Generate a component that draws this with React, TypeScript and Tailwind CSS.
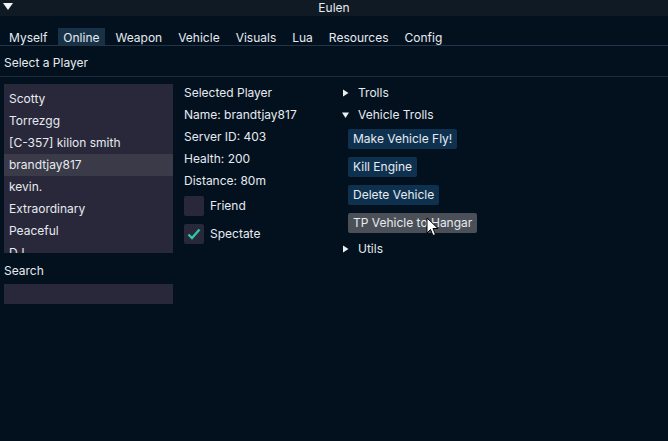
import React from 'react';

const tabs = ['Myself', 'Online', 'Weapon', 'Vehicle', 'Visuals', 'Lua', 'Resources', 'Config'];
const players = ['Scotty', 'Torrezgg', '[C-357] kilion smith', 'brandtjay817', 'kevin.', 'Extraordinary', 'Peaceful', 'DJ'];

function Tri({ open }: { open?: boolean }) {
  return (
    <svg width="7" height="8" viewBox="0 0 7 8" className="shrink-0">
      {open ? <path d="M0 1.5h7L3.5 7z" fill="#e8eef2" /> : <path d="M1 0.5v7L6.5 4z" fill="#e8eef2" />}
    </svg>
  );
}

function Check({ checked, label }: { checked?: boolean; label: string }) {
  return (
    <div className="flex h-[20px] items-center gap-[6px]">
      <div className="flex h-[20px] w-[20px] items-center justify-center rounded-[2px] bg-[#29283a]">
        {checked && (
          <svg width="14" height="12" viewBox="0 0 14 12">
            <path d="M1.5 6.5l3.5 3.5 7.5-8.5" stroke="#2fc6a6" strokeWidth="2.4" fill="none" />
          </svg>
        )}
      </div>
      <span>{label}</span>
    </div>
  );
}

export default function App() {
  return (
    <div
      className="relative h-[441px] w-[668px] overflow-hidden bg-[#03111f] text-[12px] text-[#e6ebef]"
      style={{ fontFamily: 'Inter, "Noto Sans", sans-serif' }}
    >
      {/* Title bar */}
      <div className="relative flex h-[16px] items-center justify-center bg-[#0f1a25]">
        <svg width="10" height="8" viewBox="0 0 10 8" className="absolute left-[3px] top-[3px]">
          <path d="M0 0h10L5 7z" fill="#f2f4f6" />
        </svg>
        <span className="leading-none">Eulen</span>
      </div>

      {/* Tabs */}
      <div className="mt-[12px] flex h-[18px] gap-[6px] border-b border-[#22344a] px-[4px]">
        {tabs.map((t) => (
          <div
            key={t}
            className={`flex items-center px-[5px] pt-[3px] leading-none ${t === 'Online' ? 'bg-[#173247]' : ''}`}
          >
            {t}
          </div>
        ))}
      </div>

      {/* Select a Player */}
      <div className="flex h-[31px] items-center border-b border-[#1e2d3d] px-[4px] pt-[4px]">Select a Player</div>

      <div className="flex pt-[7px]">
        {/* Left column */}
        <div className="ml-[4px] w-[169px]">
          <div className="h-[169px] overflow-hidden bg-[#29283a] pt-[4px]">
            {players.map((p) => (
              <div
                key={p}
                className={`flex h-[22px] items-center px-[5px] ${p === 'brandtjay817' ? 'bg-[#3a3a48]' : ''}`}
              >
                {p}
              </div>
            ))}
          </div>
          <div className="flex h-[31px] items-center pt-[5px]">Search</div>
          <div className="h-[20px] bg-[#29283a]" />
        </div>

        {/* Middle column */}
        <div className="-mt-[2px] ml-[11px] w-[160px]">
          <div className="flex h-[22px] items-center">Selected Player</div>
          <div className="flex h-[22px] items-center">Name: brandtjay817</div>
          <div className="flex h-[22px] items-center">Server ID: 403</div>
          <div className="flex h-[22px] items-center">Health: 200</div>
          <div className="flex h-[22px] items-center">Distance: 80m</div>
          <div className="mt-[4px] flex flex-col gap-[8px]">
            <Check label="Friend" />
            <Check checked label="Spectate" />
          </div>
        </div>

        {/* Right column */}
        <div className="-mt-[2px] flex-1">
          <div className="-ml-[2px] flex h-[22px] items-center gap-[9px]">
            <Tri />
            <span>Trolls</span>
          </div>
          <div className="-ml-[2px] flex h-[22px] items-center gap-[9px]">
            <Tri open />
            <span>Vehicle Trolls</span>
          </div>
          <div className="mt-[3px] flex flex-col items-start gap-[8px] pl-[4px]">
            <div className="flex h-[20px] items-center rounded-[2px] bg-[#0f3150] px-[5px]">Make Vehicle Fly!</div>
            <div className="flex h-[20px] items-center rounded-[2px] bg-[#0f3150] px-[5px]">Kill Engine</div>
            <div className="flex h-[20px] items-center rounded-[2px] bg-[#0f3150] px-[5px]">Delete Vehicle</div>
            <div className="flex h-[20px] items-center rounded-[2px] bg-[#4b5058] px-[5px]">TP Vehicle to Hangar</div>
          </div>
          <div className="-ml-[2px] mt-[5px] flex h-[22px] items-center gap-[9px]">
            <Tri />
            <span>Utils</span>
          </div>
        </div>
      </div>

      {/* Mouse cursor */}
      <svg width="14" height="20" viewBox="0 0 14 20" className="absolute left-[426px] top-[217px]">
        <path d="M1 1v15l3.5-3.5 2.5 6 2.5-1-2.5-6h5z" fill="#fff" stroke="#000" strokeWidth="1" />
      </svg>
    </div>
  );
}
